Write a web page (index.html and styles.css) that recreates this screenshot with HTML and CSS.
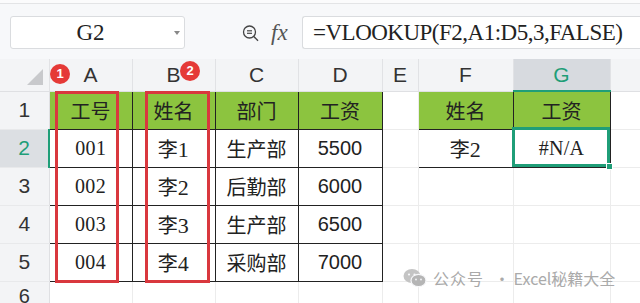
FILE: index.html
```html
<!DOCTYPE html>
<html>
<head>
<meta charset="utf-8">
<link rel="stylesheet" href="styles.css">
</head>
<body>
<div class="app">
  <div class="topline"></div>
  <div class="fbar">
    <div class="namebox"><span class="nb-text">G2</span><span class="nb-arrow"></span></div>
    <div class="ficons">
      <svg class="zoomic" width="18" height="20" viewBox="0 0 18 20">
        <circle cx="7.5" cy="8" r="6" fill="none" stroke="#444" stroke-width="1.3"/>
        <line x1="5" y1="6.8" x2="10" y2="6.8" stroke="#444" stroke-width="1.2"/>
        <line x1="5" y1="9.3" x2="10" y2="9.3" stroke="#444" stroke-width="1.2"/>
        <line x1="11.8" y1="12.4" x2="16" y2="16.8" stroke="#444" stroke-width="1.4"/>
      </svg>
      <span class="fx">fx</span>
    </div>
    <div class="formula">=VLOOKUP(F2,A1:D5,3,FALSE)</div>
  </div>
  <div class="sheetwrap">
    <table class="sheet">
      <colgroup>
        <col class="c-rh"><col class="c-a"><col class="c-b"><col class="c-c"><col class="c-d"><col class="c-e"><col class="c-f"><col class="c-g"><col class="c-h">
      </colgroup>
      <tr class="r-head">
        <th class="corner"><span class="tri"></span></th>
        <th>A</th><th>B</th><th>C</th><th>D</th><th>E</th><th>F</th><th class="hsel">G</th><th></th>
      </tr>
      <tr class="r">
        <th class="rh">1</th>
        <td class="b g">工号</td><td class="b g">姓名</td><td class="b g">部门</td><td class="b g">工资</td>
        <td></td>
        <td class="b g">姓名</td><td class="b g gsel1">工资</td><td></td>
      </tr>
      <tr class="r">
        <th class="rh rsel">2</th>
        <td class="b m">001</td><td class="b">李<span class="m">1</span></td><td class="b">生产部</td><td class="b s">5500</td>
        <td></td>
        <td class="b">李<span class="m">2</span></td><td class="b m sel">#N/A</td><td></td>
      </tr>
      <tr class="r">
        <th class="rh">3</th>
        <td class="b m">002</td><td class="b">李<span class="m">2</span></td><td class="b">后勤部</td><td class="b s">6000</td>
        <td></td><td></td><td></td><td></td>
      </tr>
      <tr class="r">
        <th class="rh">4</th>
        <td class="b m">003</td><td class="b">李<span class="m">3</span></td><td class="b">生产部</td><td class="b s">6500</td>
        <td></td><td></td><td></td><td></td>
      </tr>
      <tr class="r">
        <th class="rh">5</th>
        <td class="b m">004</td><td class="b">李<span class="m">4</span></td><td class="b">采购部</td><td class="b s">7000</td>
        <td></td><td></td><td></td><td></td>
      </tr>
      <tr class="r6">
        <th class="rh"><span class="r6n">6</span></th>
        <td></td><td></td><td></td><td></td><td></td><td></td><td></td><td></td>
      </tr>
    </table>

    <div class="selbox"><span class="handle"></span></div>
    <div class="redbox rb-a"></div>
    <div class="redbox rb-b"></div>
    <div class="badge bd-1">1</div>
    <div class="badge bd-2">2</div>

    <div class="wm">
      <svg class="wx" width="24" height="20" viewBox="0 0 24 20">
        <ellipse cx="9" cy="8" rx="8.5" ry="7" fill="#c4c4c4"/>
        <ellipse cx="15.5" cy="12.5" rx="7.5" ry="6.2" fill="#b5b5b5" stroke="#f7f8fa" stroke-width="1.2"/>
        <circle cx="6" cy="6.5" r="1.1" fill="#f7f8fa"/>
        <circle cx="11.5" cy="6.5" r="1.1" fill="#f7f8fa"/>
        <circle cx="13" cy="11.5" r="0.9" fill="#f7f8fa"/>
        <circle cx="18" cy="11.5" r="0.9" fill="#f7f8fa"/>
      </svg>
      <span class="wm-t">公众号</span>
      <span class="wm-2">· Excel秘籍大全</span>
    </div>
  </div>
</div>
</body>
</html>
```

FILE: styles.css
```css
* { box-sizing: border-box; }
html, body { margin: 0; padding: 0; }
body {
  width: 640px;
  height: 303px;
  overflow: hidden;
  background: #f7f8fa;
  font-family: "Noto Sans CJK SC", "Liberation Sans", sans-serif;
  color: #222;
}
.app { width: 640px; height: 303px; overflow: hidden; }
.topline { height: 4px; background: #fbfbfc; border-bottom: 1px solid #e3e4e6; }
.fbar {
  display: flex;
  align-items: center;
  height: 55px;
  padding: 12px 0 10px 10px;
}
.namebox {
  position: relative;
  width: 175px;
  height: 33px;
  background: #fff;
  border: 1px solid #dadcdf;
  border-radius: 3px;
  display: flex;
  align-items: center;
  justify-content: center;
}
.nb-text {
  font-family: "Liberation Serif", serif;
  font-size: 23px;
  color: #222;
  margin-left: -14px;
}
.nb-arrow {
  position: absolute;
  right: 4px;
  top: 14px;
  border-left: 3px solid transparent;
  border-right: 3px solid transparent;
  border-top: 4px solid #888;
}
.ficons {
  display: flex;
  align-items: center;
  width: 117px;
  padding-left: 57px;
}
.zoomic { margin-top: 2px; }
.fx {
  font-family: "Liberation Serif", serif;
  font-style: italic;
  font-size: 23px;
  color: #555;
  margin-left: 11px;
}
.formula {
  flex: 1;
  height: 33px;
  background: #fff;
  border: 1px solid #dadcdf;
  border-right: none;
  border-radius: 3px 0 0 3px;
  font-family: "Liberation Serif", serif;
  font-size: 23px;
  letter-spacing: -0.5px;
  line-height: 31px;
  padding-left: 10px;
  white-space: nowrap;
  color: #222;
}

.sheetwrap { position: relative; height: 244px; }
.sheet {
  border-collapse: collapse;
  table-layout: fixed;
  width: 640px;
}
.c-rh { width: 49px; }
.c-a { width: 83px; }
.c-b { width: 83px; }
.c-c { width: 83px; }
.c-d { width: 84px; }
.c-e { width: 36px; }
.c-f { width: 95px; }
.c-g { width: 97px; }
.c-h { width: 30px; }

.sheet th, .sheet td {
  padding: 0;
  text-align: center;
  white-space: nowrap;
  overflow: hidden;
}
.sheet td { background: #fff; border: 1px solid #ececec; font-size: 20px; }
.r-head th {
  height: 32px;
  background: #f3f4f6;
  border-right: 1px solid #e1e2e5;
  border-bottom: 1px solid #dfe0e3;
  font-family: "Liberation Sans", sans-serif;
  font-weight: normal;
  font-size: 21px;
  color: #333;
  line-height: 30px;
}
.corner { position: relative; }
.tri {
  position: absolute;
  right: 6px;
  bottom: 6px;
  width: 0; height: 0;
  border-left: 16px solid transparent;
  border-bottom: 16px solid #c8c9cc;
}
.hsel { background: #d7dadf !important; color: #1f9e78 !important; border-bottom: 2px solid #1f9e78 !important; }
.rh {
  background: #f3f4f6;
  border-right: 1px solid #dfe0e3;
  border-bottom: 1px solid #e8e9eb;
  font-family: "Liberation Sans", sans-serif;
  font-weight: normal;
  font-size: 21px;
  color: #333;
}
.rsel { background: #dcdfe3; color: #1f9e78; border-right: 2px solid #1f9e78; }
.r { height: 38px; }
.r6 { height: 24px; }
.r6 .rh { vertical-align: top; line-height: 24px; font-size: 20px; }
.r6n { display: inline-block; padding-top: 2px; }
.sheet td.b { border: 1.5px solid #222; }
.sheet td.g { background: #8cc43f; }
.m {
  font-family: "Liberation Serif", serif;
  font-size: 22px;
  letter-spacing: 0.3px;
}
.s { font-family: "Liberation Sans", sans-serif; font-size: 21px; }

.selbox {
  position: absolute;
  left: 512px;
  top: 68px;
  width: 98px;
  height: 40px;
  border: 3px solid #1f9e78;
}
.handle {
  position: absolute;
  right: -6px;
  bottom: -6px;
  width: 7px;
  height: 7px;
  background: #1f9e78;
  border: 1px solid #fff;
}
.redbox {
  position: absolute;
  top: 32px;
  height: 192px;
  border: 3px solid #d9383e;
}
.rb-a { left: 55px; width: 64px; }
.rb-b { left: 145px; width: 65px; }
.badge {
  position: absolute;
  width: 20px;
  height: 20px;
  border-radius: 50%;
  background: #e53a37;
  color: #fff;
  font-family: "Liberation Sans", sans-serif;
  font-weight: bold;
  font-size: 13px;
  line-height: 20px;
  text-align: center;
}
.bd-1 { left: 50px; top: 5px; }
.bd-2 { left: 180px; top: 2px; }

.wm {
  position: absolute;
  left: 403px;
  top: 207px;
  display: flex;
  align-items: center;
  color: #a9a9a9;
  font-size: 16px;
  white-space: nowrap;
}
.wm-t { margin-left: 6px; letter-spacing: 1px; }
.wm-2 { margin-left: 10px; color: #aaaaaa; }
```
